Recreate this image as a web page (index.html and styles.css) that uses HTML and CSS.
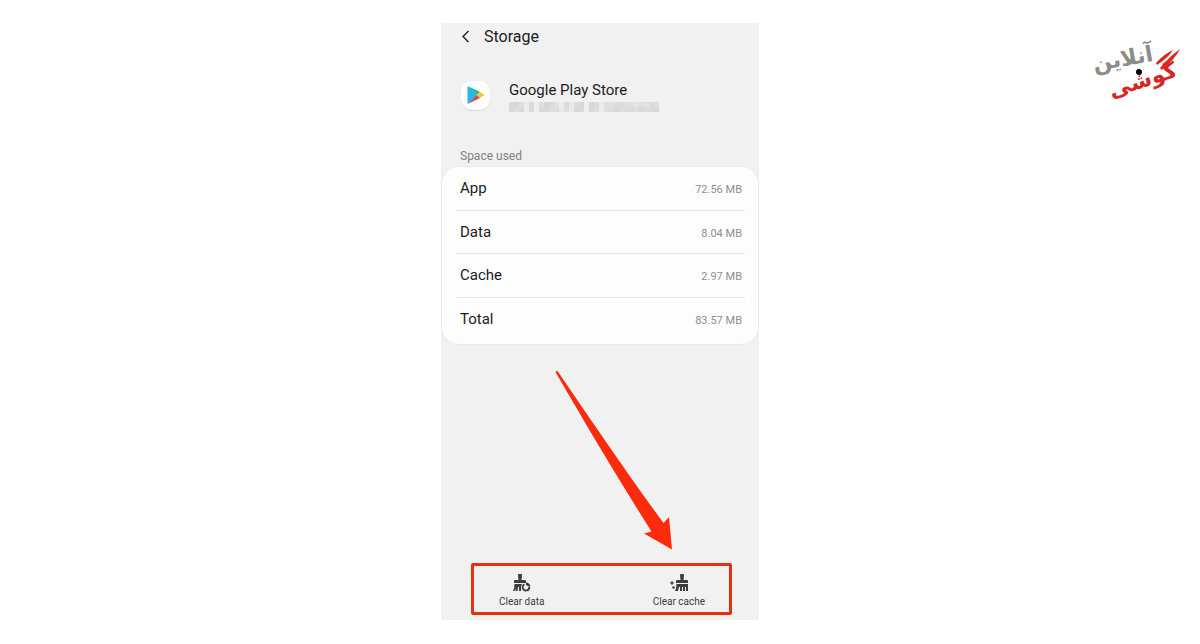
FILE: index.html
```html
<!DOCTYPE html>
<html lang="en">
<head>
  <meta charset="UTF-8" />
  <meta name="viewport" content="width=device-width, initial-scale=1.0"/>
  <title>Storage</title>
  <link rel="stylesheet" href="styles.css">
</head>
<body>
<div class="page">
  <main class="phone">
    <header class="topbar">
      <button class="back-btn" type="button" aria-label="Back">
        <svg width="10" height="14" viewBox="0 0 10 14"><path d="M8.500 1 3 6.500l5.500 5.500" fill="none" stroke="#222" stroke-width="1.400"/></svg>
      </button>
      <h1>Storage</h1>
    </header>

    <section class="app">
      <svg class="app-icon" width="32" height="32" viewBox="0 0 32 32">
        <rect x="1" y="2" width="29" height="29" rx="11" fill="#d4d4d4"/>
        <rect x="1" y="1" width="29" height="29" rx="11" fill="#fff"/>
        <path d="M7.500 6v18l9-9z" fill="#1fb9ea"/>
        <path d="M7.500 6l12.500 6-3.500 3z" fill="#1fb79b"/>
        <path d="M20 12l4.500 3-4.500 3-3.500-3z" fill="#f7c331"/>
        <path d="M7.500 24l9-9 3.500 3z" fill="#d0484f"/>
      </svg>
      <div>
        <h2>Google Play Store</h2>
        <svg class="version" id="version" width="150" height="10" viewBox="0 0 150 10"></svg>
      </div>
    </section>

    <h3>Space used</h3>
    <dl class="card">
      <div class="row"><dt>App</dt><dd>72.56 MB</dd></div>
      <div class="row"><dt>Data</dt><dd>8.04 MB</dd></div>
      <div class="row"><dt>Cache</dt><dd>2.97 MB</dd></div>
      <div class="row"><dt>Total</dt><dd>83.57 MB</dd></div>
    </dl>

    <svg class="arrow" width="118" height="180" viewBox="0 0 118 180">
      <path d="M.5 2Q1.500 0 3.500 2.500C36 50 76 109 108.500 153L114 147 117 179.500 89 163.500 96.500 161.500C62 107 30 53 .5 2z" fill="#fb2b0b"/>
    </svg>

    <footer class="actions">
      <button class="action" type="button">
        <svg width="18" height="18" viewBox="0 0 18 18" fill="#3c3c3c">
          <path d="M5 1.500a2 2 0 0 1 4 0L8.500 6H12q1 0 1 1v2H1V7q0-1 1-1h3.500z"/>
          <path d="M1.500 10H9l-1 2.500V17H6v-4H5l-.5 4H2.500l.5-3-1.500 3H0q1.500-3 1.500-7z"/>
          <path d="M11.500 10.300a3.300 3.300 0 1 0 4.800 2.700" fill="none" stroke="#3c3c3c" stroke-width="1.800"/>
          <path d="M13 8.500a5 5 0 0 1 4.500 4h-2l-2.500-1.500z"/>
        </svg>
        <span>Clear data</span>
      </button>
      <button class="action" type="button">
        <svg width="18" height="18" viewBox="0 0 18 18" fill="#3c3c3c">
          <path d="M10 1.500a2 2 0 0 1 4 0L13.500 6H17q1 0 1 1v2H6V7q0-1 1-1h3.500z"/>
          <path d="M6.500 10H18v7h-2v-4h-1v4h-2v-4h-1v4h-2v-4H9l-1 4H5q1.500-3 1.500-7z"/>
          <path d="M2 6.500l.8 1.700L4.500 9l-1.700.8L2 11.500l-.8-1.700L-.5 9l1.700-.8z"/>
          <circle cx="3.500" cy="13.500" r="1.300"/>
        </svg>
        <span>Clear cache</span>
      </button>
    </footer>
  </main>

  <svg class="logo" width="88" height="68" viewBox="0 0 88 68" lang="fa">
    <text class="logo-word grey" x="30" y="31" transform="rotate(-10 30 31)">آنلاین</text>
    <text class="logo-word red" x="51" y="52" transform="rotate(-18 51 52)">گوشی</text>
    <path d="M63 30Q74 23 79 15Q70 19 62 28zM68 35Q81 24 86 14Q76 21 66 33z" fill="#d8261f"/>
    <circle cx="45" cy="37" r="3" fill="#000"/>
  </svg>
</div>

<script>
// grey level of every 5px block of the masked version line
const blocks = [
  [218, 214, 224, 236, 218, 238, 222, 214, 218, 226, 236, 218, 232, 220, 216, 238, 214, 218, 236, 222, 226, 222, 218, 222, 224, 228, 222, 226, 218, 222],
  [216, 222, 218, 236, 218, 238, 218, 216, 222, 222, 234, 222, 234, 216, 218, 238, 216, 222, 236, 224, 220, 216, 222, 218, 218, 222, 216, 220, 218, 216]
];

document.getElementById('version').innerHTML = blocks.map((line, y) =>
  line.map((v, x) => `<rect x="${x * 5}" y="${y * 5}" width="5" height="5" fill="rgb(${v},${v},${v})"/>`).join('')
).join('');
</script>
</body>
</html>
```
FILE: styles.css
```css
body{
  margin:0;
  font-family:Roboto,"Noto Sans",sans-serif;
  background:#fff;
  color:#1c1c1c;
}
h1,h2,h3,dl,dd{margin:0;font-weight:400}
button{padding:0;border:none;background:none;font-family:inherit;color:inherit;cursor:pointer}
svg{display:block}
.page{
  display:grid;
  grid-template-columns:1fr minmax(0,318px) 1fr;
  padding:23px 0 24px;
}
.phone{
  grid-column:2;
  display:flex;
  flex-direction:column;
  background:#f1f1f1;
}
.topbar{display:flex;align-items:center;gap:14px;padding:3px 19px 0}
.topbar h1{font-size:16px;line-height:22px}
.app{display:flex;align-items:center;gap:17px;padding:32px 19px 0}
.app h2{font-size:15px;line-height:20px}
.version{margin-top:2px}
h3{font-size:12px;line-height:16px;color:#808080;padding:0 19px;margin-top:36px}
.card{
  display:grid;
  grid-auto-rows:1fr;
  height:174px;
  margin-top:2px;
  padding:0 13px 3px 14px;
  background:#fdfdfd;
  border:1px solid #ececec;
  border-radius:18px;
}
.row{display:flex;justify-content:space-between;align-items:center;padding:0 3px 0 4px;border-bottom:1px solid #e6e6e6}
.row:last-child{border-bottom:none}
dt{font-size:15px}
dd{font-size:11px;padding-top:3px;color:#8e8e8e}
.arrow{margin:25px 0 0 114px}
.actions{
  display:flex;
  justify-content:space-between;
  margin:13px 27px 5px 30px;
  padding:8px 24px 4px 25px;
  border:3px solid #e5310f;
  border-radius:2px;
}
.action{display:flex;flex-direction:column;align-items:center;gap:4px;font-size:10px;line-height:12px;color:#3c3c3c}
.logo{justify-self:end;margin:12px 18px 0 0;overflow:visible}
.logo-word{font-family:"DejaVu Sans",sans-serif;font-weight:bold;font-size:22px;text-anchor:middle}
.grey{fill:#8b8b87}
.red{fill:#d8261f}
```
